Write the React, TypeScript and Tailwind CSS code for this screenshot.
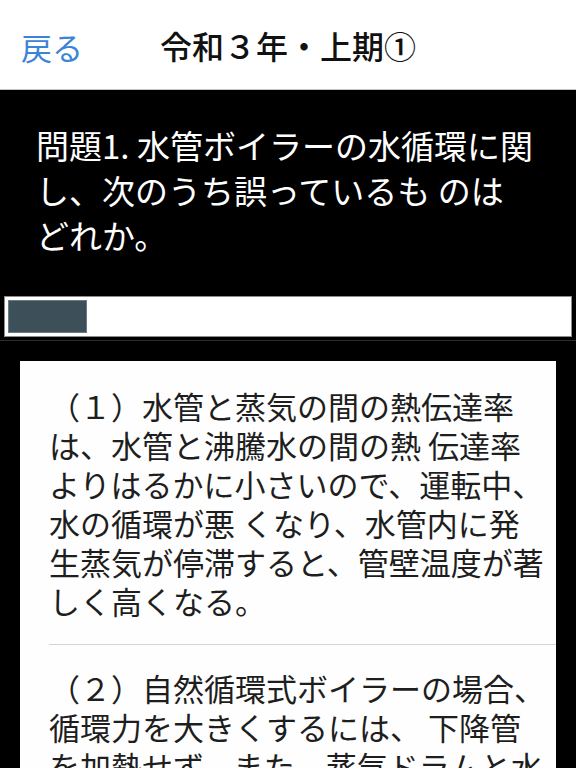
import { Fragment } from "react"

const jp = "font-['Noto_Sans_CJK_JP','Noto_Sans',sans-serif]"

const question = ["問題1. 水管ボイラーの水循環に関", "し、次のうち誤っているも のは", "どれか。"]

const choices: string[][] = [
	[
		"（１）水管と蒸気の間の熱伝達率",
		"は、水管と沸騰水の間の熱 伝達率",
		"よりはるかに小さいので、運転中、",
		"水の循環が悪 くなり、水管内に発",
		"生蒸気が停滞すると、管壁温度が著",
		"しく高くなる。",
	],
	[
		"（２）自然循環式ボイラーの場合、",
		"循環力を大きくするには、 下降管",
		"を加熱せず、また、蒸気ドラムと水",
		"ドラム間の高さを大きくする。",
	],
	[
		"（３）ボイラーの圧力が高くなる",
		"と、飽和水と飽和蒸気の密度差が",
		"小さくなるため、循環力が弱くな",
		"る。",
	],
]

// lines are broken by hand, as in the app
function Lines({ lines }: { lines: string[] }) {
	return (
		<>
			{lines.map((line, i) => (
				<Fragment key={i}>
					{i > 0 && <br />}
					{line}
				</Fragment>
			))}
		</>
	)
}

export default function App() {
	return (
		<div className={`min-h-screen bg-black ${jp}`}>
			{/* navigation bar */}
			<header className="grid h-[90px] grid-cols-[1fr_auto_1fr] items-center border-b border-[#c6c6c6] bg-white">
				<button className="justify-self-start pt-[3px] pl-[21px] text-[31px] leading-none text-[#3a84d6]">
					戻る
				</button>
				<h1 className="text-[32px] leading-none font-medium text-[#111]">令和３年・上期①</h1>
				<div />
			</header>

			{/* question */}
			<p className="px-[36px] pt-[33px] text-[33px] leading-[45px] whitespace-nowrap text-white">
				<Lines lines={question} />
			</p>

			{/* progress bar */}
			<div className="mx-[4px] mt-[38px] h-[41px] border border-[#8c8c8c] bg-white p-[3px]">
				<div className="h-[33px] w-[79px] border border-[#6b7b83] bg-[#3d4f58]" />
			</div>
			<div className="mt-[3px] h-px bg-[#2c2c2c]" />

			{/* choices */}
			<div className="mx-[20px] mt-[20px] bg-[#fefefe]">
				{choices.map((lines, i) => (
					<p
						key={i}
						className={`ml-[29px] pb-[24px] text-[31px] leading-[39px] whitespace-nowrap text-[#1e1e1e] ${
							i === 0 ? "pt-[25px]" : "border-t border-[#d4d4d4] pt-[23px]"
						}`}
					>
						<Lines lines={lines} />
					</p>
				))}
			</div>
		</div>
	)
}
